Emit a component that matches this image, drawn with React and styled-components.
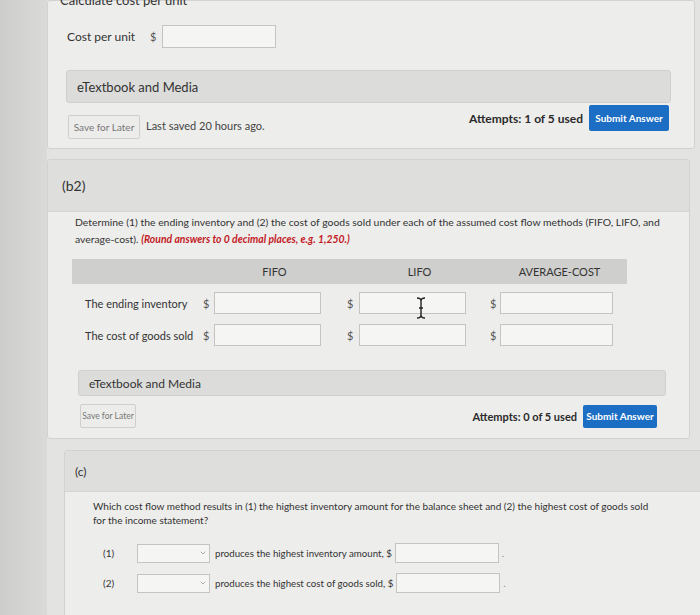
import React from 'react';
import styled, { createGlobalStyle } from 'styled-components';
import { ChevronDown } from 'lucide-react';

const GlobalStyle = createGlobalStyle`
  *, *::before, *::after { box-sizing: border-box; }
  html, body {
    margin: 0;
    padding: 0;
    background: #e3e3e1;
    font-family: Lato, "Open Sans", sans-serif;
    overflow: hidden;
  }
`;

const Screen = styled.div`
  display: flex;
  width: 700px;
  height: 615px;
  overflow: hidden;
`;

const Bezel = styled.div`
  width: 47px;
  flex-shrink: 0;
  background: linear-gradient(to right, #cdcdcb, #dadad8);
`;

const Column = styled.div`
  flex: 1;
  display: flex;
  flex-direction: column;
  gap: 10px;
`;

const Card = styled.section`
  flex-shrink: 0;
  height: ${p => p.$h}px;
  margin: ${p => p.$margin || '0'};
  background: #ededeb;
  border: 1px solid #d2d2d0;
  border-radius: 3px;
  display: flex;
  flex-direction: column;
`;

const CardHead = styled.div`
  flex-shrink: 0;
  height: ${p => p.$h}px;
  background: #dededc;
  border-bottom: 1px solid #d4d4d2;
  display: flex;
  align-items: center;
  padding-left: ${p => p.$pad}px;
  font-size: ${p => p.$size || 14}px;
  color: #333;
`;

const CardBody = styled.div`
  padding: ${p => p.$pad};
  display: flex;
  flex-direction: column;
`;

const CutText = styled.div`
  font-size: 13px;
  color: #333;
  margin-top: -9px;
  margin-left: 12px;
  height: 12px;
`;

const CostRow = styled.div`
  display: flex;
  align-items: center;
  margin: 21px 0 0 19px;
  font-size: 12px;
  color: #333;
`;

const Label = styled.span`
  width: ${p => p.$w}px;
  font-size: ${p => p.$size || 11}px;
  color: #333;
  flex-shrink: 0;
`;

const Dollar = styled.span`
  width: ${p => p.$w || 11}px;
  font-size: 11px;
  color: #555;
  flex-shrink: 0;
`;

const Input = styled.div`
  position: relative;
  width: ${p => p.$w}px;
  height: ${p => p.$h || 22}px;
  background: #f5f5f3;
  border: 1px solid #c4c4c2;
  flex-shrink: 0;
`;

const MediaBar = styled.div`
  margin: ${p => p.$margin};
  height: ${p => p.$h}px;
  background: #dcdcda;
  border: 1px solid #d0d0ce;
  border-radius: 3px;
  display: flex;
  align-items: center;
  padding-left: 10px;
  font-size: ${p => p.$size}px;
  color: #333;
`;

const Footer = styled.div`
  display: flex;
  align-items: ${p => p.$align || 'center'};
  margin: ${p => p.$margin};
  gap: 6px;
`;

const SaveButton = styled.div`
  width: ${p => p.$w}px;
  height: ${p => p.$h}px;
  margin-top: ${p => p.$top || 0}px;
  border: 1px solid #cfcfcd;
  background: #ececea;
  border-radius: 2px;
  display: flex;
  align-items: center;
  justify-content: center;
  font-size: ${p => p.$size}px;
  color: #777;
  white-space: nowrap;
`;

const Saved = styled.span`
  margin-top: ${p => p.$top || 0}px;
  font-size: 11px;
  color: #444;
`;

const Attempts = styled.span`
  margin-left: auto;
  margin-top: ${p => p.$top || 0}px;
  font-size: ${p => p.$size || 12}px;
  font-weight: 700;
  color: #2a2a2a;
`;

const Submit = styled.div`
  width: ${p => p.$w}px;
  height: ${p => p.$h}px;
  background: #1c6ec4;
  border-radius: 2px;
  color: #fff;
  font-size: 10px;
  font-weight: 700;
  display: flex;
  align-items: center;
  justify-content: center;
`;

const Prompt = styled.p`
  margin: ${p => p.$margin};
  font-size: ${p => p.$size || 11}px;
  line-height: ${p => p.$lh || 17}px;
  color: #333;
`;

const Hint = styled.span`
  color: #c41a26;
  font-style: italic;
  font-weight: 700;
`;

const TableHead = styled.div`
  display: grid;
  grid-template-columns: 130px 145px 145px 135px;
  margin: 11px 0 0 -3px;
  width: 555px;
  height: 25px;
  background: #cfcfcd;
  align-items: center;
  font-size: 11px;
  color: #333;
  text-align: center;
`;

const GridRow = styled.div`
  display: flex;
  align-items: center;
  margin: ${p => p.$margin};
`;

const Cell = styled.div`
  display: flex;
  align-items: center;
  width: ${p => p.$w}px;
  flex-shrink: 0;
`;

const Cursor = styled.svg`
  position: absolute;
  left: 56px;
  top: 4px;
`;

const Select = styled.div`
  width: 73px;
  height: 19px;
  background: #f5f5f3;
  border: 1px solid #c4c4c2;
  display: flex;
  align-items: center;
  justify-content: flex-end;
  padding-right: 2px;
  color: #888;
  flex-shrink: 0;
`;

const Phrase = styled.span`
  font-size: 9.7px;
  color: #333;
  margin: 0 3px 0 5px;
  white-space: nowrap;
`;

const Dot = styled.span`
  font-size: 10px;
  color: #888;
  margin-left: 3px;
`;

function IBeam() {
  return (
    <Cursor width="10" height="22" viewBox="0 0 10 22">
      <path d="M1 1 Q5 1 5 4 Q5 1 9 1 M5 4 V18 M1 21 Q5 21 5 18 Q5 21 9 21 M3 11 H7"
        stroke="#222" strokeWidth="1.4" fill="none" />
    </Cursor>
  );
}

function TopCard() {
  return (
    <Card $h={149} $margin="0 5px 0 0">
      <CutText>Calculate cost per unit</CutText>
      <CostRow>
        <Label $w={83} $size={12}>Cost per unit</Label>
        <Dollar $w={12}>$</Dollar>
        <Input $w={114} $h={23} />
      </CostRow>
      <MediaBar $margin="22px 23px 0 18px" $h={33} $size={13}>eTextbook and Media</MediaBar>
      <Footer $margin="2px 25px 0 20px" $align="flex-start">
        <SaveButton $w={72} $h={24} $size={10} $top={10}>Save for Later</SaveButton>
        <Saved $top={14}>Last saved 20 hours ago.</Saved>
        <Attempts $top={6}>Attempts: 1 of 5 used</Attempts>
        <Submit $w={80} $h={26}>Submit Answer</Submit>
      </Footer>
    </Card>
  );
}

function AmountRow({ label, margin, labelW, cursor }) {
  return (
    <GridRow $margin={margin}>
      <Label $w={labelW}>{label}</Label>
      <Cell $w={144}><Dollar>$</Dollar><Input $w={107} /></Cell>
      <Cell $w={143}>
        <Dollar $w={12}>$</Dollar>
        <Input $w={107}>{cursor && <IBeam />}</Input>
      </Cell>
      <Cell $w={130}><Dollar $w={10}>$</Dollar><Input $w={113} /></Cell>
    </GridRow>
  );
}

function CostFlowCard() {
  return (
    <Card $h={280} $margin="0 10px 0 0">
      <CardHead $h={52} $pad={14}>(b2)</CardHead>
      <CardBody $pad="0 0 0 27px">
        <Prompt $margin="2px 25px 0 0" $size={10.4}>
          Determine (1) the ending inventory and (2) the cost of goods sold under each of the assumed cost flow methods (FIFO, LIFO, and average-cost). <Hint>(Round answers to 0 decimal places, e.g. 1,250.)</Hint>
        </Prompt>
        <TableHead>
          <span />
          <span>FIFO</span>
          <span>LIFO</span>
          <span>AVERAGE-COST</span>
        </TableHead>
        <AmountRow label="The ending inventory" labelW={118} margin="8px 0 0 10px" cursor />
        <AmountRow label="The cost of goods sold" labelW={118} margin="10px 0 0 10px" />
        <MediaBar $margin="24px 23px 0 3px" $h={26} $size={12}>eTextbook and Media</MediaBar>
        <Footer $margin="8px 32px 0 5px">
          <SaveButton $w={56} $h={24} $size={8.5}>Save for Later</SaveButton>
          <Attempts $size={11}>Attempts: 0 of 5 used</Attempts>
          <Submit $w={74} $h={23}>Submit Answer</Submit>
        </Footer>
      </CardBody>
    </Card>
  );
}

function ChoiceRow({ num, text, margin }) {
  return (
    <GridRow $margin={margin}>
      <Label $w={34} $size={10}>{num}</Label>
      <Select><ChevronDown size={8} strokeWidth={2} /></Select>
      <Phrase>{text}</Phrase>
      <Input $w={104} $h={20} />
      <Dot>.</Dot>
    </GridRow>
  );
}

function HighestCard() {
  return (
    <Card $h={180} $margin="1px -4px 0 17px">
      <CardHead $h={41} $pad={10} $size={12}>(c)</CardHead>
      <CardBody $pad="0 0 0 28px">
        <Prompt $margin="7px 40px 0 0" $size={10} $lh={14}>
          Which cost flow method results in (1) the highest inventory amount for the balance sheet and (2) the highest cost of goods sold for the income statement?
        </Prompt>
        <ChoiceRow num="(1)" text="produces the highest inventory amount, $" margin="16px 0 0 10px" />
        <ChoiceRow num="(2)" text="produces the highest cost of goods sold, $" margin="10px 0 0 10px" />
      </CardBody>
    </Card>
  );
}

export default function App() {
  return (
    <>
      <GlobalStyle />
      <Screen>
        <Bezel />
        <Column>
          <TopCard />
          <CostFlowCard />
          <HighestCard />
        </Column>
      </Screen>
    </>
  );
}
